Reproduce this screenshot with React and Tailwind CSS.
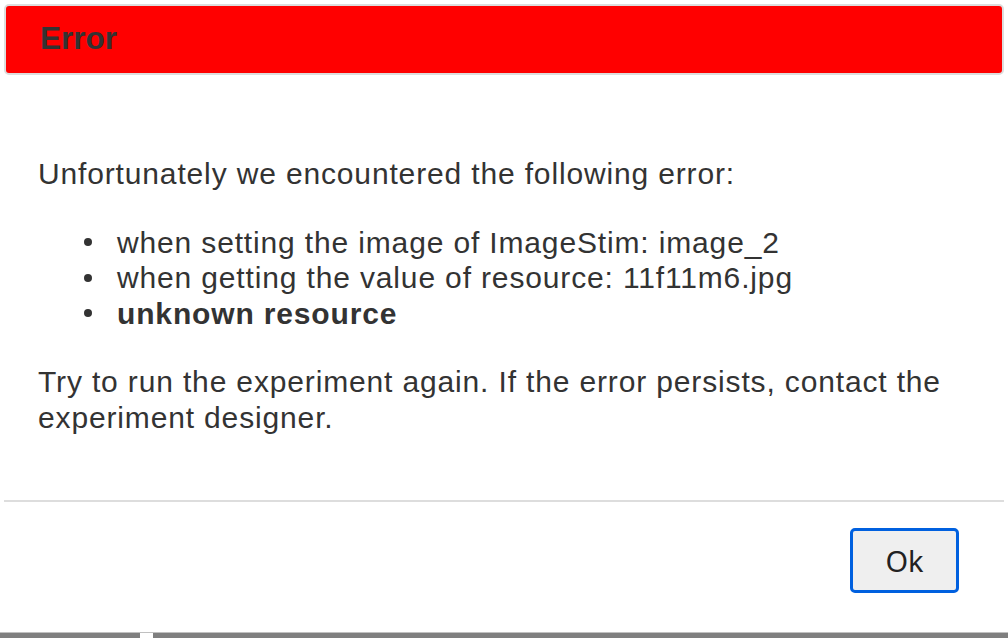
function Item({ children, bold }) {
  return (
    <li className="flex items-center">
      <span className="ml-[46px] mr-[25px] w-[8px] h-[8px] rounded-full bg-[#333333] shrink-0"></span>
      <span className={bold ? "font-bold" : ""}>{children}</span>
    </li>
  );
}

export default function App() {
  return (
    <div className="w-[1008px] h-[638px] bg-white flex flex-col overflow-hidden" style={{ fontFamily: '"Liberation Sans", Arial, sans-serif' }}>
      <div className="flex-1 flex flex-col px-[4px] pt-[4px]">
        <div className="h-[71px] rounded-[5px] border-2 border-[#dddddd] bg-[#ff0000] flex items-center pl-[34px]">
          <span className="text-[31.5px] font-bold text-[#333333] leading-none mt-[-2px]">Error</span>
        </div>
        <div className="h-[425px] pl-[34px] pr-[20px] pt-[81px] text-[#333333] text-[30px] leading-[35.5px] tracking-[0.85px]">
          <p>Unfortunately we encountered the following error:</p>
          <ul className="mt-[33px]">
            <Item>when setting the image of ImageStim: image_2</Item>
            <Item>when getting the value of resource: 11f11m6.jpg</Item>
            <Item bold>unknown resource</Item>
          </ul>
          <p className="mt-[33px]">Try to run the experiment again. If the error persists, contact the experiment designer.</p>
        </div>
        <div className="h-[2px] bg-[#dddddd]"></div>
        <div className="flex justify-end pr-[45px] pt-[26px]">
          <button className="w-[109px] h-[65px] rounded-[5px] border-[3px] border-[#0060df] bg-[#efefef] text-[29px] text-[#222222] flex items-center justify-center" style={{ fontFamily: '"Noto Sans", "Liberation Sans", sans-serif' }}>Ok</button>
        </div>
      </div>
      <div className="h-[6px] border-t border-[#c0c0c0] bg-[#7f7f7f] flex">
        <div className="w-[140px]"></div>
        <div className="w-[13px] bg-white"></div>
      </div>
    </div>
  );
}
